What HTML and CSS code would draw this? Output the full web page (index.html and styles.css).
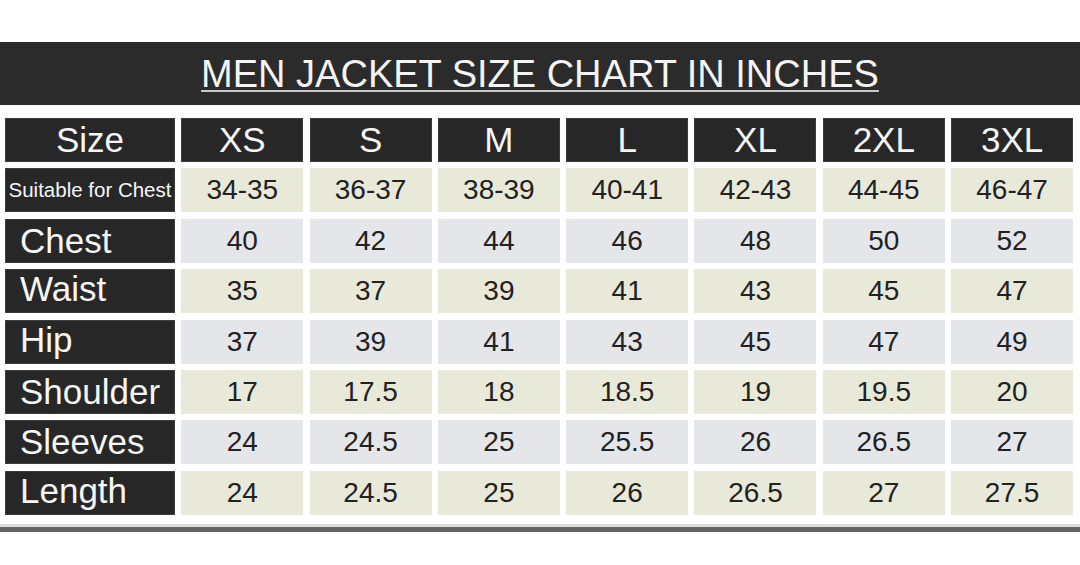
FILE: index.html
```html
<!DOCTYPE html>
<html>
<head>
<meta charset="utf-8">
<link rel="stylesheet" href="styles.css">
</head>
<body>
<div class="page">
  <div class="title-bar"><span class="title">MEN JACKET SIZE CHART IN INCHES</span></div>
  <div class="chart">
    <div class="cell dark head center">Size</div>
    <div class="cell dark head">XS</div>
    <div class="cell dark head">S</div>
    <div class="cell dark head">M</div>
    <div class="cell dark head">L</div>
    <div class="cell dark head">XL</div>
    <div class="cell dark head">2XL</div>
    <div class="cell dark head">3XL</div>

    <div class="cell dark small">Suitable for Chest</div>
    <div class="cell beige">34-35</div>
    <div class="cell beige">36-37</div>
    <div class="cell beige">38-39</div>
    <div class="cell beige">40-41</div>
    <div class="cell beige">42-43</div>
    <div class="cell beige">44-45</div>
    <div class="cell beige">46-47</div>

    <div class="cell dark label">Chest</div>
    <div class="cell gray">40</div>
    <div class="cell gray">42</div>
    <div class="cell gray">44</div>
    <div class="cell gray">46</div>
    <div class="cell gray">48</div>
    <div class="cell gray">50</div>
    <div class="cell gray">52</div>

    <div class="cell dark label up">Waist</div>
    <div class="cell beige">35</div>
    <div class="cell beige">37</div>
    <div class="cell beige">39</div>
    <div class="cell beige">41</div>
    <div class="cell beige">43</div>
    <div class="cell beige">45</div>
    <div class="cell beige">47</div>

    <div class="cell dark label up">Hip</div>
    <div class="cell gray">37</div>
    <div class="cell gray">39</div>
    <div class="cell gray">41</div>
    <div class="cell gray">43</div>
    <div class="cell gray">45</div>
    <div class="cell gray">47</div>
    <div class="cell gray">49</div>

    <div class="cell dark label">Shoulder</div>
    <div class="cell beige">17</div>
    <div class="cell beige">17.5</div>
    <div class="cell beige">18</div>
    <div class="cell beige">18.5</div>
    <div class="cell beige">19</div>
    <div class="cell beige">19.5</div>
    <div class="cell beige">20</div>

    <div class="cell dark label">Sleeves</div>
    <div class="cell gray">24</div>
    <div class="cell gray">24.5</div>
    <div class="cell gray">25</div>
    <div class="cell gray">25.5</div>
    <div class="cell gray">26</div>
    <div class="cell gray">26.5</div>
    <div class="cell gray">27</div>

    <div class="cell dark label up">Length</div>
    <div class="cell beige">24</div>
    <div class="cell beige">24.5</div>
    <div class="cell beige">25</div>
    <div class="cell beige">26</div>
    <div class="cell beige">26.5</div>
    <div class="cell beige">27</div>
    <div class="cell beige">27.5</div>
  </div>
  <div class="bottom-rule"></div>
</div>
</body>
</html>
```

FILE: styles.css
```css
html, body {
  margin: 0;
  padding: 0;
  background: #ffffff;
}

body {
  width: 1080px;
  height: 565px;
  overflow: hidden;
  font-family: "Liberation Sans", Arial, sans-serif;
}

.page {
  padding-top: 42px;
}

.title-bar {
  height: 61px;
  padding-top: 2px;
  line-height: 61px;
  background: #2b2b2b;
  text-align: center;
}

.title {
  color: #f4f4f4;
  font-size: 38px;
  text-decoration: underline;
  text-decoration-color: #c8c8c8;
  text-decoration-thickness: 2px;
  text-underline-offset: 3px;
}

.chart {
  display: grid;
  grid-template-columns: 170px repeat(7, 122px);
  grid-auto-rows: 44px;
  column-gap: 6.3px;
  row-gap: 6.4px;
  margin: 13px 0 0 5px;
}

.cell {
  display: flex;
  align-items: center;
  justify-content: center;
  font-size: 28px;
  line-height: 44px;
  color: #222222;
  white-space: nowrap;
}

.dark {
  background: #272727;
  color: #f6f6f6;
  box-shadow: inset 0 0 0 1px #3c3c3c;
}

.head {
  font-size: 35px;
}

.small {
  font-size: 20.5px;
}

.label {
  justify-content: flex-start;
  padding-left: 15px;
  font-size: 35px;
}

.label.up {
  padding-bottom: 4px;
}

.beige {
  background: #e9e9da;
}

.gray {
  background: #e5e6e9;
}

.bottom-rule {
  margin-top: 9px;
  height: 5px;
  border-top: 3px solid #dcdcdc;
  background: #646464;
}
```
